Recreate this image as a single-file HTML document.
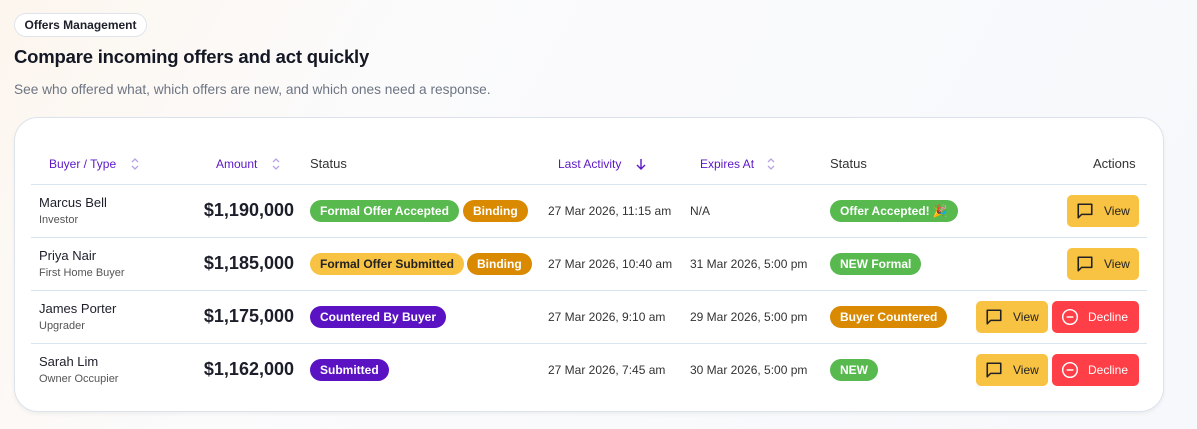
<!DOCTYPE html>
<html><head><meta charset="utf-8"><style>
*{margin:0;padding:0;box-sizing:border-box}
body{width:1197px;height:429px;overflow:hidden;font-family:"Liberation Sans",sans-serif;background:linear-gradient(120deg,#fdf6ee 0%,#fbfbfc 30%,#f6f8fb 100%);position:relative;color:#1c1f2a}
.a{position:absolute;white-space:nowrap}
.pill{position:absolute;left:14px;top:13px;height:24px;width:133px;border:1px solid #dfe4ec;border-radius:12px;background:#fff;font-size:12px;font-weight:bold;line-height:22px;text-align:center;color:#1c1f2a}
h1{position:absolute;left:14px;top:46px;font-size:18.5px;font-weight:bold;color:#141824;letter-spacing:-0.2px}
.sub{left:14px;top:82px;font-size:13.7px;color:#6d7583}
.card{position:absolute;left:14px;top:117px;width:1150px;height:295px;background:#fff;border:1px solid #dde3ec;border-radius:24px;box-shadow:0 2px 4px rgba(0,0,0,.05)}
.hd{top:157px;font-size:12px;color:#5b17c6}
.hs{top:156px;font-size:13px;color:#333}
.line{position:absolute;left:31px;width:1116px;height:1px;background:#d8e4ee}
.nm{font-size:13px;color:#1c1f2a}
.ty{font-size:11px;color:#555}
.amt{font-size:18px;font-weight:bold;color:#1c1f2a;text-align:right;width:200px;left:94px}
.b{position:absolute;height:22px;border-radius:11px;font-size:12px;font-weight:bold;line-height:22px;padding:0 10px;color:#fff;white-space:nowrap}
.g{background:#58b94f}.o{background:#d98a00}.y{background:#f8c242;color:#222}.p{background:#5a12c2}
.dt{font-size:12px;color:#333}
.btn{position:absolute;height:32px;border-radius:5px;font-size:12px;line-height:32px;white-space:nowrap}
.v{background:#f8c242;color:#222;width:72px}
.d{background:#ff3f47;color:#fff;width:87px}
.btn svg{position:absolute;left:9px;top:7px}
.btn span{position:absolute}
.v span{left:37px}.d span{left:36px}
</style></head><body>
<div class="pill">Offers Management</div>
<h1>Compare incoming offers and act quickly</h1>
<div class="a sub">See who offered what, which offers are new, and which ones need a response.</div>
<div class="card"></div>

<div class="a hd" style="left:49px">Buyer / Type</div>
<svg class="a" style="left:130px;top:157px" width="10" height="14" viewBox="0 0 10 14"><path d="M2 5l3-3 3 3M2 9l3 3 3-3" fill="none" stroke="#b9a3e6" stroke-width="1.3"/></svg>
<div class="a hd" style="left:216px">Amount</div>
<svg class="a" style="left:271px;top:157px" width="10" height="14" viewBox="0 0 10 14"><path d="M2 5l3-3 3 3M2 9l3 3 3-3" fill="none" stroke="#b9a3e6" stroke-width="1.3"/></svg>
<div class="a hs" style="left:310px">Status</div>
<div class="a hd" style="left:558px">Last Activity</div>
<svg class="a" style="left:635px;top:157px" width="12" height="14" viewBox="0 0 12 14"><path d="M6 2v10M2 8l4 4 4-4" fill="none" stroke="#5b17c6" stroke-width="1.4"/></svg>
<div class="a hd" style="left:700px">Expires At</div>
<svg class="a" style="left:766px;top:157px" width="10" height="14" viewBox="0 0 10 14"><path d="M2 5l3-3 3 3M2 9l3 3 3-3" fill="none" stroke="#b9a3e6" stroke-width="1.3"/></svg>
<div class="a hs" style="left:830px">Status</div>
<div class="a hs" style="left:1093px">Actions</div>

<div class="line" style="top:184px"></div>
<div class="line" style="top:237px"></div>
<div class="line" style="top:290px"></div>
<div class="line" style="top:343px"></div>

<!-- row 1 -->
<div class="a nm" style="left:39px;top:195px">Marcus Bell</div>
<div class="a ty" style="left:39px;top:214px">Investor</div>
<div class="a amt" style="top:200px">$1,190,000</div>
<div class="b g" style="left:310px;top:200px">Formal Offer Accepted</div>
<div class="b o" style="left:463px;top:200px">Binding</div>
<div class="a dt" style="left:548px;top:204px">27 Mar 2026, 11:15 am</div>
<div class="a dt" style="left:690px;top:204px">N/A</div>
<div class="b g" style="left:830px;top:200px">Offer Accepted! 🎉</div>
<div class="btn v" style="left:1067px;top:195px"><svg width="18" height="18" viewBox="0 0 16 16"><path d="M2 2h12v9H5l-3 3z" fill="none" stroke="#222" stroke-width="1.4" stroke-linejoin="round"/></svg><span>View</span></div>

<!-- row 2 -->
<div class="a nm" style="left:39px;top:248px">Priya Nair</div>
<div class="a ty" style="left:39px;top:267px">First Home Buyer</div>
<div class="a amt" style="top:253px">$1,185,000</div>
<div class="b y" style="left:310px;top:253px">Formal Offer Submitted</div>
<div class="b o" style="left:467px;top:253px">Binding</div>
<div class="a dt" style="left:548px;top:257px">27 Mar 2026, 10:40 am</div>
<div class="a dt" style="left:690px;top:257px">31 Mar 2026, 5:00 pm</div>
<div class="b g" style="left:830px;top:253px">NEW Formal</div>
<div class="btn v" style="left:1067px;top:248px"><svg width="18" height="18" viewBox="0 0 16 16"><path d="M2 2h12v9H5l-3 3z" fill="none" stroke="#222" stroke-width="1.4" stroke-linejoin="round"/></svg><span>View</span></div>

<!-- row 3 -->
<div class="a nm" style="left:39px;top:301px">James Porter</div>
<div class="a ty" style="left:39px;top:320px">Upgrader</div>
<div class="a amt" style="top:306px">$1,175,000</div>
<div class="b p" style="left:310px;top:306px">Countered By Buyer</div>
<div class="a dt" style="left:548px;top:310px">27 Mar 2026, 9:10 am</div>
<div class="a dt" style="left:690px;top:310px">29 Mar 2026, 5:00 pm</div>
<div class="b o" style="left:830px;top:306px">Buyer Countered</div>
<div class="btn v" style="left:976px;top:301px"><svg width="18" height="18" viewBox="0 0 16 16"><path d="M2 2h12v9H5l-3 3z" fill="none" stroke="#222" stroke-width="1.4" stroke-linejoin="round"/></svg><span>View</span></div>
<div class="btn d" style="left:1052px;top:301px"><svg width="18" height="18" viewBox="0 0 16 16"><circle cx="8" cy="8" r="6.5" fill="none" stroke="#fff" stroke-width="1.3"/><path d="M5 8h6" stroke="#fff" stroke-width="1.3"/></svg><span>Decline</span></div>

<!-- row 4 -->
<div class="a nm" style="left:39px;top:354px">Sarah Lim</div>
<div class="a ty" style="left:39px;top:373px">Owner Occupier</div>
<div class="a amt" style="top:359px">$1,162,000</div>
<div class="b p" style="left:310px;top:359px">Submitted</div>
<div class="a dt" style="left:548px;top:363px">27 Mar 2026, 7:45 am</div>
<div class="a dt" style="left:690px;top:363px">30 Mar 2026, 5:00 pm</div>
<div class="b g" style="left:830px;top:359px">NEW</div>
<div class="btn v" style="left:976px;top:354px"><svg width="18" height="18" viewBox="0 0 16 16"><path d="M2 2h12v9H5l-3 3z" fill="none" stroke="#222" stroke-width="1.4" stroke-linejoin="round"/></svg><span>View</span></div>
<div class="btn d" style="left:1052px;top:354px"><svg width="18" height="18" viewBox="0 0 16 16"><circle cx="8" cy="8" r="6.5" fill="none" stroke="#fff" stroke-width="1.3"/><path d="M5 8h6" stroke="#fff" stroke-width="1.3"/></svg><span>Decline</span></div>
</body></html>
